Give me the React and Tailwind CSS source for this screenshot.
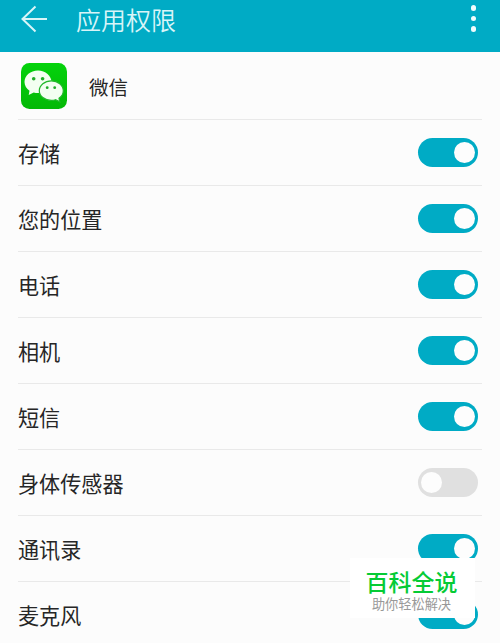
import React, { useState } from "react";

const PERMISSIONS = [
  { id: "storage", label: "存储", enabled: true },
  { id: "location", label: "您的位置", enabled: true },
  { id: "phone", label: "电话", enabled: true },
  { id: "camera", label: "相机", enabled: true },
  { id: "sms", label: "短信", enabled: true },
  { id: "sensors", label: "身体传感器", enabled: false },
  { id: "contacts", label: "通讯录", enabled: true },
  { id: "microphone", label: "麦克风", enabled: true },
];

function Header() {
  return (
    <header className="flex h-[52px] items-start justify-between bg-[#00abc5] pl-[21px] pr-[24px] text-white">
      <div className="flex h-[38px] items-center">
        <button aria-label="返回">
          <svg width="27" height="28" viewBox="0 0 27 28" fill="none" stroke="#d8f5f8" strokeWidth="2">
            <path d="M1.5 14H26M14.5 1.5L1.5 14L14.5 26.5" />
          </svg>
        </button>
        <h1 className="ml-[28px] pt-px text-[25px] leading-none font-[350] text-[#d8f5f8]">应用权限</h1>
      </div>
      <button aria-label="更多" className="flex flex-col gap-[5px] pt-[5px]">
        <span className="size-[5.5px] rounded-full bg-[#f0fcfd]"></span>
        <span className="size-[5.5px] rounded-full bg-[#f0fcfd]"></span>
        <span className="size-[5.5px] rounded-full bg-[#f0fcfd]"></span>
      </button>
    </header>
  );
}

function WeChatIcon() {
  return (
    <svg width="46" height="46" viewBox="0 0 46 46">
      <defs>
        <linearGradient id="wechat-green" x1="0" y1="0" x2="0" y2="1">
          <stop offset="0" stopColor="#04d30c" />
          <stop offset="1" stopColor="#04b806" />
        </linearGradient>
      </defs>
      <rect width="46" height="46" rx="8.5" fill="url(#wechat-green)" />
      <path
        d="M17 7.5C9.5 7.5 3.5 12.6 3.5 19c0 3.6 2 6.7 5 8.8l-.8 4.2 5-2.6c1.4.4 2.8.6 4.3.6 7.5 0 13.5-4.9 13.5-11S24.5 7.5 17 7.5z"
        fill="#f3fff1"
      />
      <path
        d="M30.3 17.8c6.6 0 12 4.4 12 9.9 0 3.1-1.7 5.8-4.3 7.6l.8 3.5-4.3-2.1c-1.3.4-2.7.6-4.2.6-6.6 0-12-4.3-12-9.6s5.4-9.9 12-9.9z"
        fill="#f3fff1"
        stroke="#22b82a"
        strokeWidth="1.2"
      />
      <g fill="#20ad28">
        <circle cx="12.7" cy="15.8" r="1.8" />
        <circle cx="21.6" cy="15.8" r="1.8" />
        <circle cx="26.2" cy="24.7" r="1.4" />
        <circle cx="33.7" cy="24.7" r="1.4" />
      </g>
    </svg>
  );
}

function Toggle({ label, checked, onChange }) {
  return (
    <button
      role="switch"
      aria-label={label}
      aria-checked={checked}
      onClick={onChange}
      className={`flex h-[29px] w-[60px] items-center rounded-full px-[3px] ${
        checked ? "justify-end bg-[#00abc5]" : "justify-start bg-[#e0e0e0]"
      }`}
    >
      <span className="size-[21px] rounded-full bg-[#fdfdfd]"></span>
    </button>
  );
}

export default function App() {
  const [permissions, setPermissions] = useState(PERMISSIONS);

  function toggle(id) {
    setPermissions(
      permissions.map((p) => (p.id === id ? { ...p, enabled: !p.enabled } : p))
    );
  }

  return (
    <div className="relative h-[643px] w-[500px] overflow-hidden bg-[#fcfcfc] font-['Noto_Sans_CJK_SC',sans-serif] text-[#262626]">
      <Header />
      <main className="px-[18px]">
        <div className="flex h-[68px] items-center border-b border-[#e9e9e9] pl-[3px]">
          <WeChatIcon />
          <span className="ml-[22px] pt-[2px] text-[19.5px] leading-none">微信</span>
        </div>
        {permissions.map((p) => (
          <div key={p.id} className="flex h-[66px] items-center justify-between border-b border-[#e9e9e9] pr-[4px]">
            <span className="pt-[2px] text-[21.1px] leading-[21px]">{p.label}</span>
            <Toggle label={p.label} checked={p.enabled} onChange={() => toggle(p.id)} />
          </div>
        ))}
      </main>
      <div className="absolute left-[350px] top-[558px] flex h-[60px] w-[125px] flex-col items-center bg-white pt-[14px] pr-[2px] font-['Liberation_Sans','Noto_Sans_CJK_SC',sans-serif]">
        <span className="text-[23px] leading-[23px] font-medium text-[#05cb35]">百科全说</span>
        <span className="mt-[3px] text-[13.2px] leading-[13px] text-[#999999]">助你轻松解决</span>
      </div>
    </div>
  );
}
